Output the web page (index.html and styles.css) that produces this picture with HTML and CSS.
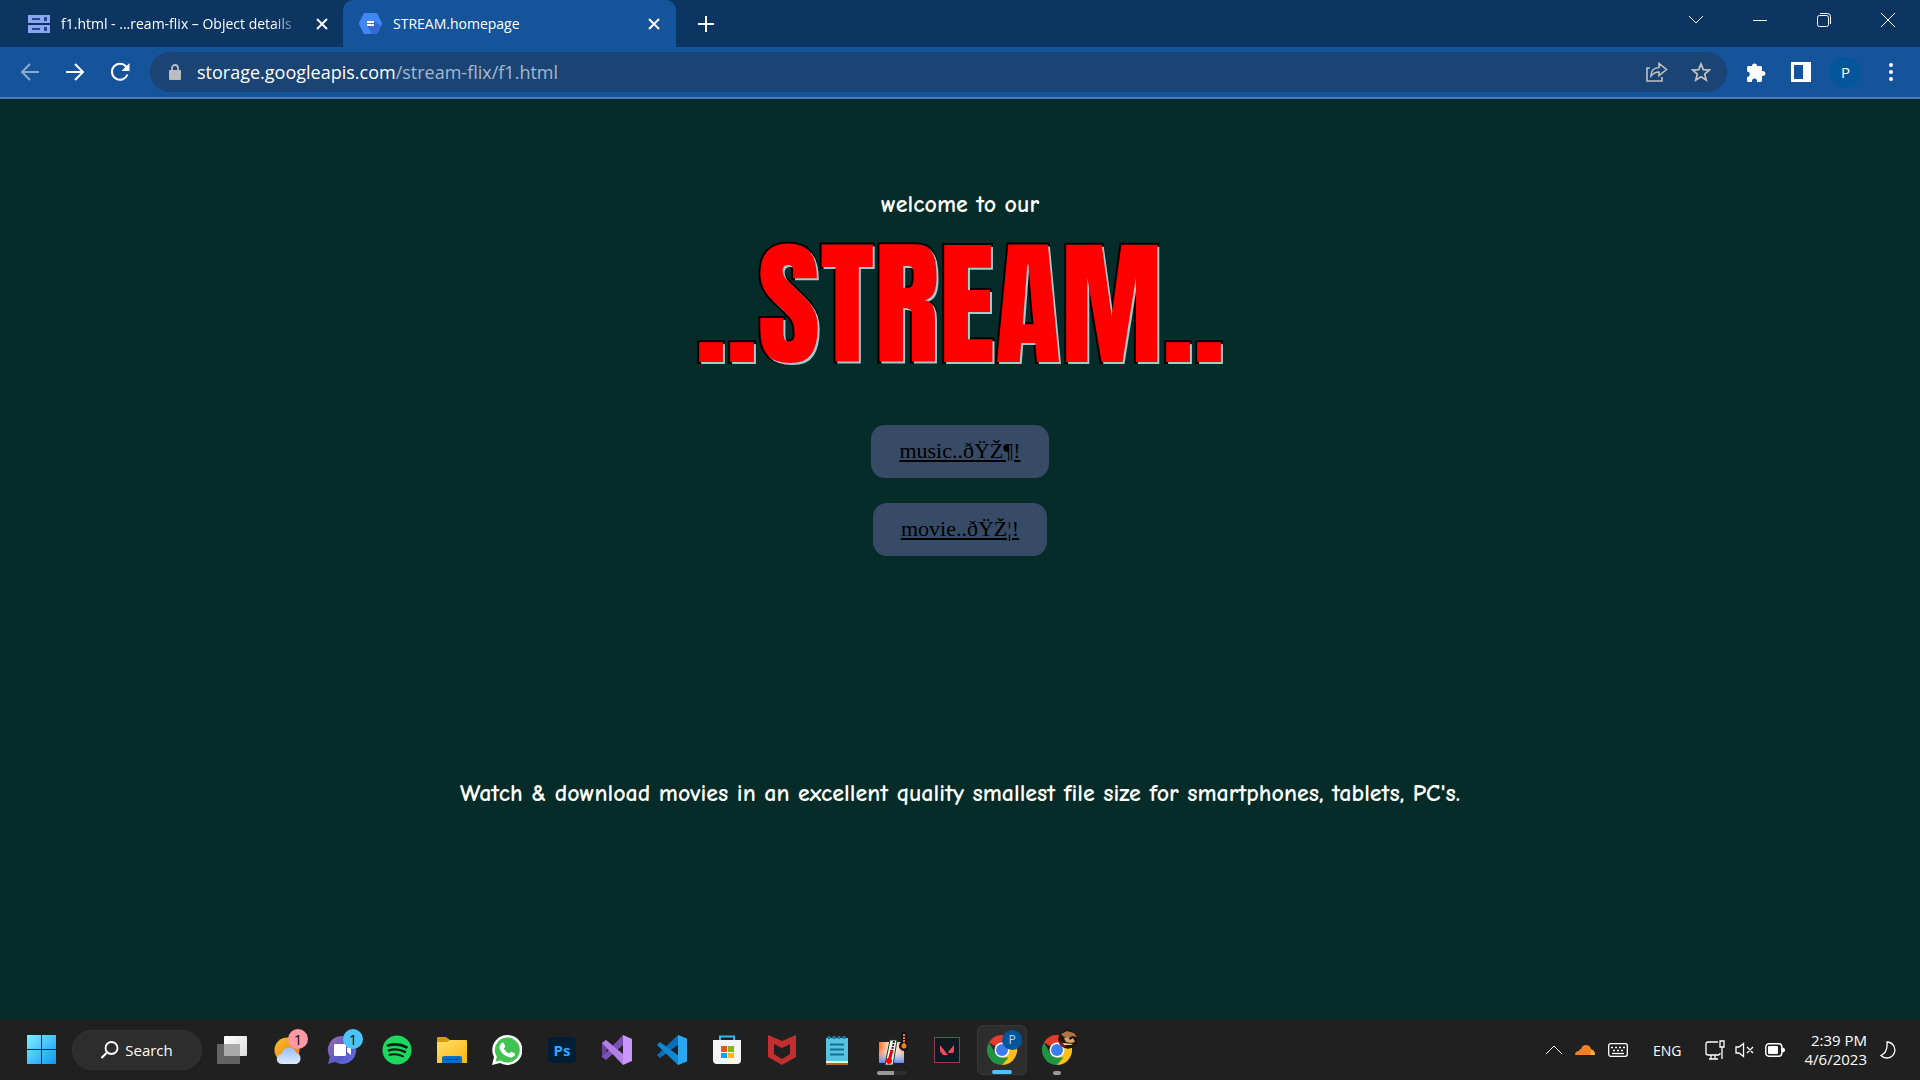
FILE: index.html
```html
<!DOCTYPE html>
<html lang="en">
<head>
<meta charset="utf-8">
<title>STREAM.homepage</title>
<link rel="stylesheet" href="styles.css">
</head>
<body>
<header class="browser">
  <div class="tabstrip">
    <div class="tab">
      <svg class="favicon" viewBox="0 0 22 18" width="22" height="18"><path fill="#8ba6f0" d="M0 0h22v8H0zM0 10h22v8H0z"/><path fill="#24488f" d="M4 3h8v2H4zM4 13h8v2H4zM16 2h3v4h-3zM16 12h3v4h-3z"/></svg>
      <span class="tab-title tab-title-fade">f1.html - ...ream-flix – Object details</span>
      <button class="icon-btn tab-close" aria-label="Close tab"><svg viewBox="0 0 12 12" width="12" height="12"><path class="line2" d="M1 1l10 10M11 1L1 11"/></svg></button>
    </div>
    <div class="tab tab-active">
      <svg class="favicon" viewBox="0 0 23 21" width="23" height="21"><path fill="#4285f4" d="M6 0h11q1 0 1.500 1l4.300 8.500q.4 1 0 2L18.500 20q-.5 1-1.500 1H6q-1 0-1.500-1L.2 11.500q-.4-1 0-2L4.500 1Q5 0 6 0z"/><path fill="#3569d6" d="M15 8l7 5-3.500 7q-.5 1-1.500 1h-4l-5-8z"/><path fill="#fff" d="M8 8h7v2H8zM8 11h7v2H8z"/></svg>
      <span class="tab-title">STREAM.homepage</span>
      <button class="icon-btn tab-close" aria-label="Close tab"><svg viewBox="0 0 12 12" width="12" height="12"><path class="line2" d="M1 1l10 10M11 1L1 11"/></svg></button>
    </div>
    <button class="icon-btn new-tab" aria-label="New tab"><svg viewBox="0 0 16 16" width="16" height="16"><path class="line2" d="M8 0v16M0 8h16"/></svg></button>
    <div class="window-controls">
      <button class="icon-btn" aria-label="Search tabs"><svg viewBox="0 0 14 14" width="14" height="14"><path class="line1" d="M0 3l7 7 7-7"/></svg></button>
      <button class="icon-btn" aria-label="Minimize"><svg viewBox="0 0 14 14" width="14" height="14"><path class="line1" d="M0 7.500h14"/></svg></button>
      <button class="icon-btn" aria-label="Restore"><svg viewBox="0 0 14 14" width="14" height="14"><rect class="line1" x=".5" y="2.500" width="11" height="11" rx="2"/><path class="line1" d="M3 .5h7.500a3 3 0 0 1 3 3V11"/></svg></button>
      <button class="icon-btn" aria-label="Close"><svg viewBox="0 0 14 14" width="14" height="14"><path class="line1" d="M0 0l14 14M14 0L0 14"/></svg></button>
    </div>
  </div>
  <div class="toolbar">
    <div class="nav">
      <button class="icon-btn nav-off" aria-label="Back"><svg viewBox="0 0 20 20" width="20" height="20"><path class="line2" d="M19 10H2M10 2l-8 8 8 8"/></svg></button>
      <button class="icon-btn" aria-label="Forward"><svg viewBox="0 0 20 20" width="20" height="20"><path class="line2" d="M1 10h17M10 2l8 8-8 8"/></svg></button>
      <button class="icon-btn" aria-label="Reload"><svg viewBox="0 0 20 20" width="20" height="20"><path class="line2" d="M17.500 12.500A8 8 0 1 1 16 4.500l2 2"/><path fill="#fff" d="M19.500 1v8h-8z"/></svg></button>
    </div>
    <div class="omnibox">
      <svg viewBox="0 0 12 16" width="12" height="16"><rect y="6" width="12" height="10" rx="1" fill="#b9bcc0"/><path d="M3 7V4a3 3 0 0 1 6 0v3" fill="none" stroke="#b9bcc0" stroke-width="1.800"/></svg>
      <span class="url" role="textbox" aria-label="Address" contenteditable="true" spellcheck="false"><span class="url-host">storage.googleapis.com</span>/stream-flix/f1.html</span>
      <button class="icon-btn" aria-label="Share"><svg viewBox="0 0 22 20" width="22" height="20"><path fill="none" stroke="#bfc1c4" stroke-width="1.600" d="M4 6H1v13h15v-4M5 14c0-5 3-8.500 8-8.500V1.500l7.500 6-7.500 6V10c-4 0-6 1.500-8 4z"/></svg></button>
      <button class="icon-btn" aria-label="Bookmark"><svg viewBox="0 0 20 20" width="20" height="20"><path fill="none" stroke="#bfc1c4" stroke-width="1.800" d="M10 2l2.300 5.600 6 .5-4.600 4 1.500 5.900L10 14.800 4.800 18l1.500-5.900-4.600-4 6-.5z"/></svg></button>
    </div>
    <div class="actions">
      <button class="icon-btn" aria-label="Extensions"><svg viewBox="0 0 20 20" width="20" height="20"><path fill="#fff" d="M1 5.500Q1 4 2.500 4H6a2.500 2.500 0 1 1 5 0h3.500Q16 4 16 5.500V9h1a2.500 2.500 0 0 1 0 5h-1v4.500Q16 20 14.500 20H11v-1a2.500 2.500 0 0 0-5 0v1H2.500Q1 20 1 18.500V15a2.600 2.600 0 0 0 0-5.400z"/></svg></button>
      <button class="icon-btn" aria-label="Side panel"><svg viewBox="0 0 20 20" width="20" height="20"><path fill="#fff" fill-rule="evenodd" d="M0 0h20v20H0zM3 3v14h9V3z"/></svg></button>
      <button class="icon-btn" aria-label="Profile"><span class="avatar">P</span></button>
      <button class="icon-btn" aria-label="Menu"><svg viewBox="0 0 4 18" width="4" height="18"><g fill="#fff"><circle cx="2" cy="2" r="2"/><circle cx="2" cy="9" r="2"/><circle cx="2" cy="16" r="2"/></g></svg></button>
    </div>
  </div>
</header>

<main class="page">
  <p class="comic">welcome to our</p>
  <h1 class="logo">..STREAM..</h1>
  <nav class="links">
    <a class="pill" href="#music">music..ðŸŽ¶!</a>
    <a class="pill" href="#movie">movie..ðŸŽ¦!</a>
  </nav>
  <p class="comic tagline">Watch &amp; download movies in an excellent quality smallest file size for smartphones, tablets, PC's.</p>
</main>

<footer class="taskbar">
  <div class="apps">
    <button class="app" aria-label="Start"><svg viewBox="0 0 30 30" width="30" height="30"><defs><linearGradient id="win" x1="0" y1="0" x2="30" y2="30" gradientUnits="userSpaceOnUse"><stop offset="0" stop-color="#7cf0ff"/><stop offset="1" stop-color="#0c93f5"/></linearGradient></defs><path fill="url(#win)" d="M0 0h14v14H0zM15 0h14v14H15zM0 15h14v14H0zM15 15h14v14H15z"/></svg></button>
    <button class="search"><svg viewBox="0 0 18 18" width="18" height="18"><circle cx="10.500" cy="7" r="6" fill="none" stroke="#fff" stroke-width="1.800"/><path class="line2" d="M6 11.500l-5.500 5.500"/></svg>Search</button>
    <button class="app" aria-label="Task view"><svg viewBox="0 0 30 28" width="30" height="28"><defs><linearGradient id="tv" x2="1" y2="1"><stop stop-color="#fff"/><stop offset="1" stop-color="#ddd"/></linearGradient></defs><rect y="8" width="23" height="20" rx="1" fill="#636363"/><rect x="7" width="23" height="20" rx="1" fill="url(#tv)"/><path fill="#aaa" d="M7 8h16v12H7z"/></svg></button>
    <button class="app" aria-label="Weather"><svg viewBox="0 0 30 30" width="30" height="30"><defs><linearGradient id="sun" x2="1" y2="1"><stop stop-color="#f4c52c"/><stop offset="1" stop-color="#ec6e0c"/></linearGradient><linearGradient id="cld" x2="0" y2="1"><stop stop-color="#9abcf0"/><stop offset="1" stop-color="#dcebff"/></linearGradient></defs><circle cx="15" cy="15" r="12.500" fill="url(#sun)"/><path fill="url(#cld)" d="M10 29a5 5 0 0 1-.5-10A7.500 7.500 0 0 1 24 17.500 6 6 0 0 1 24.500 29z"/></svg><span class="badge badge-pink">1</span></button>
    <button class="app" aria-label="Chat"><svg viewBox="0 0 30 30" width="30" height="30"><defs><linearGradient id="chat" x2="1" y2="1"><stop stop-color="#a06ab0"/><stop offset=".6" stop-color="#5558c8"/><stop offset="1" stop-color="#6a6ff0"/></linearGradient></defs><path fill="url(#chat)" d="M15 1a14 14 0 1 1-7 26l-7 2 1.800-7A14 14 0 0 1 15 1z"/><rect x="7" y="9" width="12" height="12" rx="1" fill="#fff"/><path fill="#fff" d="M20 13l4-3v10l-4-3z"/></svg><span class="badge badge-blue">1</span></button>
    <button class="app" aria-label="Spotify"><svg viewBox="0 0 30 30" width="30" height="30"><circle cx="15" cy="15" r="14.500" fill="#1ed760"/><g fill="none" stroke="#0c1d12" stroke-linecap="round"><path stroke-width="2.800" d="M6 10.500c6-1.800 13-1.300 18.500 1.700"/><path stroke-width="2.400" d="M7 15.300c5-1.500 11-1 16 1.600"/><path stroke-width="2" d="M7.500 19.800c4.500-1.200 9-.8 13.500 1.600"/></g></svg></button>
    <button class="app" aria-label="File Explorer"><svg viewBox="0 0 30 28" width="30" height="28"><defs><linearGradient id="fold" x2="1" y2="1"><stop stop-color="#ffdf6b"/><stop offset="1" stop-color="#f9b60f"/></linearGradient></defs><path fill="#dc9a0b" d="M0 2q0-1 1-1h8l4 3v4H0z"/><path fill="url(#fold)" d="M0 6h10l3-2h16q1 0 1 1v22H0z"/><path fill="#0b6dc4" d="M5 27v-5q0-2 2-2h16q2 0 2 2v5z"/><path fill="#084a8c" d="M8 23h14v1H8z"/></svg></button>
    <button class="app" aria-label="WhatsApp"><svg viewBox="0 0 30 30" width="30" height="30"><path fill="#fff" d="M15 0a15 15 0 1 1-7 28L0 30l2-8A15 15 0 0 1 15 0z"/><path fill="#40c351" d="M15 2.500a12.500 12.500 0 1 1-6.500 23L3.600 26.500l1.300-4.700A12.500 12.500 0 0 1 15 2.500z"/><path fill="#fff" d="M9.500 8q1.800-1 2.500.5l1 2.500q.4 1-1.300 2.500 2 3.700 5.500 5 1.500-2 2.300-1.800l3 1.500q.8.500.2 2-1.500 2.800-5.200 2C12 21 8 16.500 7.500 13q-.2-3 2-5z"/></svg></button>
    <button class="app" aria-label="Photoshop"><span class="ps">Ps</span></button>
    <button class="app" aria-label="Visual Studio"><svg viewBox="0 0 30 30" width="30" height="30"><path fill="#5c3d91" d="M0 8l3-2v18l-3-2z"/><path fill="#68449f" d="M0 8l4-3 6 5-6 6v5l-4 2z"/><path fill="#7b50b5" d="M0 22L21 0v10L4 25z"/><path fill="#b07fe8" d="M4 5l17 14v11L0 8z"/><path fill="#c996ff" d="M21 0l9 4v22l-9 4z"/></svg></button>
    <button class="app" aria-label="Visual Studio Code"><svg viewBox="0 0 30 30" width="30" height="30"><path fill="#0a6fb8" d="M0 20L21 0l1 9L3 23z"/><path fill="#0f87d3" d="M0 10l3-3 19 14-1 9z"/><path fill="#2aa8f2" d="M21 0l9 3.500v23L21 30z"/></svg></button>
    <button class="app" aria-label="Microsoft Store"><svg viewBox="0 0 30 30" width="30" height="30"><path d="M8 6V1.500h14V6" fill="none" stroke="#2fb9f0" stroke-width="2"/><path fill="#f5f5f5" d="M1 5h28v20q0 4-4 4H5q-4 0-4-4z"/><path fill="#f25022" d="M9 11h6v6H9z"/><path fill="#7fba00" d="M16 11h6v6h-6z"/><path fill="#00a4ef" d="M9 18h6v5H9z"/><path fill="#ffb900" d="M16 18h6v5h-6z"/></svg></button>
    <button class="app" aria-label="McAfee"><svg viewBox="0 0 28 30" width="28" height="30"><path fill="#c12f2f" fill-rule="evenodd" d="M0 0l14 6L28 0v22l-14 8L0 22zM6 9v10l8 5 8-5V9l-8 4z"/></svg></button>
    <button class="app" aria-label="Notepad"><svg viewBox="0 0 24 30" width="24" height="30"><path fill="#b5651c" d="M1 27h22v3H1z"/><path fill="#e9eef0" d="M1 25h22v3H1z"/><path fill="#56c4e0" d="M1 3h22v23H1z"/><path stroke="#126f93" stroke-width="2" d="M5 9.500h14M5 14.500h14M5 19.500h14"/><g fill="#157da3"><circle cx="4" cy="2.500" r="1.800"/><circle cx="9" cy="2.500" r="1.800"/><circle cx="14" cy="2.500" r="1.800"/><circle cx="19" cy="2.500" r="1.800"/></g></svg></button>
    <button class="app" aria-label="Temperature monitor"><svg viewBox="0 0 32 36" width="32" height="36"><defs><linearGradient id="hot" x2="1" y2="0"><stop stop-color="#ff7024"/><stop offset=".5" stop-color="#fff"/><stop offset="1" stop-color="#ffb080"/></linearGradient><linearGradient id="cold" x2="0" y2="1"><stop offset=".3" stop-color="#fff" stop-opacity="0"/><stop offset="1" stop-color="#4d86ff"/></linearGradient></defs><rect x="3" y="10" width="25" height="21" fill="url(#hot)"/><rect x="3" y="10" width="25" height="21" fill="url(#cold)"/><path fill="#fff" stroke="#173c20" d="M14 8h7l-4 25H9z"/><path stroke="#151515" stroke-width="2" stroke-dasharray="2 1" d="M18 9l-2 10"/><path stroke="#e00" stroke-width="3" d="M16 18l-3 11"/><circle cx="13" cy="29" r="3" fill="#f00"/><path fill="#131525" d="M25 0h6v10a5 5 0 1 1-6 0z"/><path stroke="#f08018" stroke-width="2" stroke-dasharray="2 1" d="M28 2v11"/><circle cx="28" cy="14" r="2.500" fill="#f08018"/></svg><span class="run run-half"></span></button>
    <button class="app" aria-label="Valorant"><svg viewBox="0 0 26 26" width="26" height="26"><rect x=".5" y=".5" width="25" height="25" fill="#0f1923" stroke="#9c3944"/><path fill="#f4485a" d="M6 8l8 10h-5l-3-4zM20 8v6l-1 2h-4l-1-1z"/></svg></button>
    <button class="app app-active" aria-label="Chrome"><svg viewBox="0 0 30 30" width="30" height="30"><path fill="#e33b2e" d="M15 15L2 7.500A15 15 0 0 1 28 7.500z"/><path fill="#fbc116" d="M15 15L15 7.500h13A15 15 0 0 1 15 30z"/><path fill="#229342" d="M2 7.500l6.500 11.300L15 22.500h6.500L15 30A15 15 0 0 1 2 7.500z"/><circle cx="15" cy="15" r="7.500" fill="#fff"/><circle cx="15" cy="15" r="6" fill="#3b7ded"/></svg><span class="badge badge-profile">P</span><span class="run run-active"></span></button>
    <button class="app" aria-label="Chrome, second profile"><svg viewBox="0 0 30 30" width="30" height="30"><path fill="#e33b2e" d="M15 15L2 7.500A15 15 0 0 1 28 7.500z"/><path fill="#fbc116" d="M15 15L15 7.500h13A15 15 0 0 1 15 30z"/><path fill="#229342" d="M2 7.500l6.500 11.300L15 22.500h6.500L15 30A15 15 0 0 1 2 7.500z"/><circle cx="15" cy="15" r="7.500" fill="#fff"/><circle cx="15" cy="15" r="6" fill="#3b7ded"/></svg><svg class="badge" viewBox="0 0 20 20" width="20" height="20"><circle cx="10" cy="10" r="10" fill="#21150f"/><path fill="#a87545" d="M3 5l6-3 7 2 3 4-5-1-3 2-5-1z"/><path fill="#d9a566" d="M6 9l4-1 2 3 3-2 2 4-4 1-5-1z"/><path fill="#8e1d16" d="M1 12l5 2 2 5-4-2z"/><path fill="#ead09b" d="M5 14l10 1-2 1-7 0z"/></svg><span class="run"></span></button>
  </div>
  <div class="tray">
    <button class="icon-btn" aria-label="Show hidden icons"><svg viewBox="0 0 16 10" width="16" height="10"><path class="line1" d="M0 9l8-8 8 8"/></svg></button>
    <svg viewBox="0 0 20 10" width="20" height="10"><path fill="#f38020" d="M0 10q0-4 4-4 0-2 2-2 1-4 5-4 4 0 5 4 4 1 4 6z"/><path fill="#faad3f" d="M15 10l1-5q4 1 4 5z"/></svg>
    <svg viewBox="0 0 20 14" width="20" height="14"><rect x=".7" y=".7" width="18.600" height="12.600" rx="2" fill="none" stroke="#fff" stroke-width="1.300"/><path stroke="#fff" stroke-width="1.500" stroke-dasharray="2 2" d="M3 4.500h14M5 7.500h11"/><path stroke="#fff" stroke-width="1.300" d="M4 10.500h12"/></svg>
    <button class="lang">ENG</button>
    <button class="quick" aria-label="Network, volume, battery">
      <svg viewBox="0 0 20 20" width="20" height="20"><path fill="none" stroke="#fff" stroke-width="1.300" d="M13 2H3Q1 2 1 4v9q0 2 2 2h10q2 0 2-2M6 15v4M10 15v4M4 19h9M15 1h4v6h-4zM17 7v12"/></svg>
      <svg viewBox="0 0 20 16" width="20" height="16"><path fill="none" stroke="#fff" stroke-width="1.300" d="M1 5h3l4.500-3.500v13L4 11H1zM12 5l6 6M18 5l-6 6"/></svg>
      <svg viewBox="0 0 20 14" width="20" height="14"><rect x=".8" y=".8" width="16" height="12.400" rx="3" fill="none" stroke="#fff" stroke-width="1.400"/><rect x="3" y="3" width="10" height="8" rx="1" fill="#fff"/><path fill="#fff" d="M17 4.500q3 0 3 2.500t-3 2.500z"/></svg>
    </button>
    <button class="clock"><span>2:39 PM</span><span>4/6/2023</span></button>
    <svg viewBox="0 0 16 18" width="16" height="18"><path fill="none" stroke="#fff" stroke-width="1.300" d="M7 1a8 8 0 1 1-6 13.500Q8 11 7 1z"/></svg>
  </div>
</footer>
</body>
</html>
```
FILE: styles.css
```css
* { box-sizing: border-box; }

body {
  margin: 0;
  min-height: 100vh;
  display: flex;
  flex-direction: column;
  background: #052c28;
  color: #fff;
  font-family: "Segoe UI", "Open Sans", "Noto Sans", sans-serif;
  font-size: 15px;
}

button {
  margin: 0;
  padding: 0;
  border: 0;
  background: none;
  color: inherit;
  font: inherit;
}

svg { display: block; flex: none; }

.line1 { fill: none; stroke: #fff; stroke-width: 1; }
.line2 { fill: none; stroke: #fff; stroke-width: 2; }

.icon-btn {
  display: flex;
  align-items: center;
  justify-content: center;
}

/* Browser chrome */
.tabstrip {
  display: flex;
  height: 47px;
  background: #0c3561;
}

.tab {
  display: flex;
  align-items: center;
  gap: 11px;
  width: 343px;
  padding: 0 12px 0 28px;
}

.tab-active {
  width: 333px;
  padding: 0 13px 0 16px;
  background: #15539a;
  border-radius: 10px 10px 0 0;
}

.tab-title {
  flex: 1;
  overflow: hidden;
  font-size: 14px;
  white-space: nowrap;
}

.tab-title-fade {
  -webkit-mask-image: linear-gradient(to right, #000 88%, transparent);
  mask-image: linear-gradient(to right, #000 88%, transparent);
}

.tab-close { width: 18px; height: 24px; }
.new-tab { width: 60px; }

.window-controls {
  display: flex;
  margin-left: auto;
  padding-bottom: 8px;
}

.window-controls .icon-btn { width: 64px; }

.toolbar {
  display: flex;
  align-items: center;
  height: 52px;
  padding-left: 7px;
  background: #15539a;
  border-bottom: 2px solid #427bbb;
}

.nav, .actions { display: flex; }
.nav { width: 143px; }
.nav .icon-btn, .actions .icon-btn { width: 45px; height: 40px; }
.nav-off { opacity: 0.5; }
.actions { padding: 0 7px 0 6px; }

.omnibox {
  flex: 1;
  display: flex;
  align-items: center;
  height: 40px;
  padding: 0 4px 0 19px;
  border-radius: 20px;
  background: #1a4474;
}

.omnibox .icon-btn { width: 44px; height: 40px; }

.url {
  flex: 1;
  padding-left: 16px;
  color: #a6b8cf;
  font-size: 18px;
  line-height: 24px;
  white-space: nowrap;
}

.url-host { color: #fff; }

.avatar {
  width: 31px;
  line-height: 31px;
  border-radius: 50%;
  background: #04569c;
  text-align: center;
}

/* Site content */
.page {
  flex: 1;
  display: flex;
  flex-direction: column;
  align-items: center;
  padding: 88px 16px 0;
}

.comic {
  margin: 0;
  font: 700 24px/34px "Comic Sans MS", "Comic Neue", "Open Sans", sans-serif;
}

.logo {
  margin: 20px 0 56px;
  color: #f00;
  font: 400 136px/128px Impact, Anton, "Roboto Condensed", sans-serif;
  -webkit-text-stroke: 4px #000;
  paint-order: stroke fill;
  text-shadow: 2px 2px 0 #a5c8cc;
}

.links {
  display: flex;
  flex-direction: column;
  align-items: center;
  gap: 25px;
}

.pill {
  padding: 12px 28px 13px;
  border-radius: 14px;
  background: #374a66;
  color: #000;
  font: 22px/28px "Times New Roman", "Liberation Serif", serif;
}

.tagline { margin-top: 220px; }

/* Taskbar */
.taskbar {
  display: flex;
  justify-content: space-between;
  align-items: center;
  height: 60px;
  padding: 0 24px 0 17px;
  background: #202020;
}

.apps { display: flex; align-items: center; gap: 5px; }

.app {
  position: relative;
  display: flex;
  align-items: center;
  justify-content: center;
  width: 50px;
  height: 50px;
  border-radius: 6px;
}

.app-active {
  background: #2d2d2d;
  border: 1px solid #383838;
}

.search {
  display: flex;
  align-items: center;
  justify-content: center;
  gap: 6px;
  width: 130px;
  height: 40px;
  border: 1px solid #343434;
  border-radius: 20px;
  background: #2d2d2d;
}

.badge {
  position: absolute;
  top: 4px;
  right: 4px;
  width: 20px;
  height: 20px;
  border-radius: 50%;
  line-height: 20px;
  text-align: center;
}

.badge-pink { background: #ff99a4; color: #111; }
.badge-blue { background: #4cc2ff; color: #111; }
.badge-profile { background: #04569c; color: #bcd8f0; font-size: 12px; }

.ps {
  width: 28px;
  border-radius: 5px;
  background: #001e36;
  color: #31a8ff;
  font-weight: 700;
  line-height: 26px;
}

.run {
  position: absolute;
  bottom: 0;
  width: 8px;
  height: 4px;
  border-radius: 2px;
  background: #9a9a9a;
}

.run-half { width: 30px; background: linear-gradient(to right, #9a9a9a 58%, #2d2d2d 58%); }
.run-active { width: 20px; background: #4cc2ff; }

.tray { display: flex; align-items: center; gap: 13px; }
.lang { padding: 0 10px 0 12px; font-size: 14px; }
.quick { display: flex; align-items: center; gap: 10px; }

.clock {
  display: flex;
  flex-direction: column;
  padding-left: 7px;
  line-height: 19px;
  text-align: right;
}
```
